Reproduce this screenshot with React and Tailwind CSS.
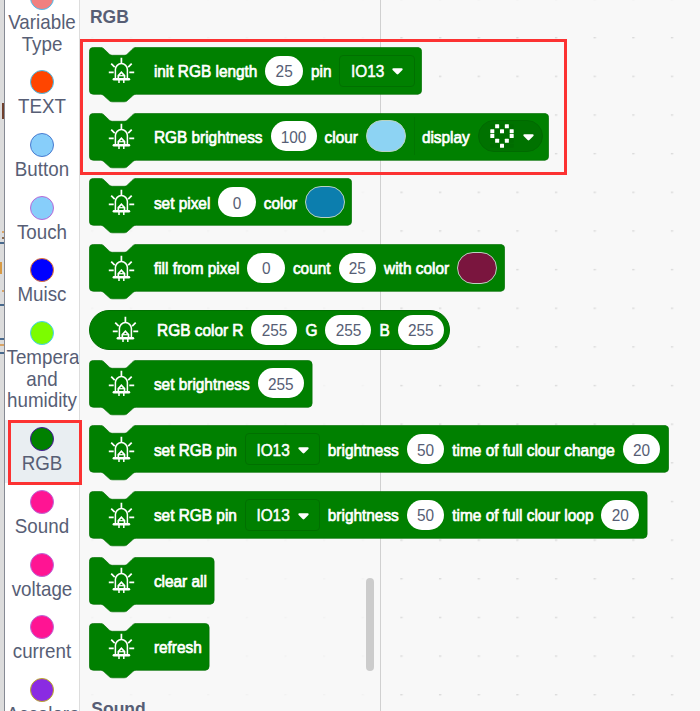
import React from "react";

const categories = [
  { label: "Variable Type", dot: "bg-[#f08080] border-[#45c1f2]" },
  { label: "TEXT", dot: "bg-[#ff4500] border-[#45c1f2]" },
  { label: "Button", dot: "bg-[#87cefa] border-[#4a7bd0]" },
  { label: "Touch", dot: "bg-[#87cefa] border-[#ba68d8]" },
  { label: "Muisc", dot: "bg-[#0000ff] border-[#f07a28]" },
  { label: "Temperature and humidity", dot: "bg-[#7cfc00] border-[#45d0f2]" },
  { label: "RGB", dot: "bg-[#008000] border-[#4b14a0]", active: true },
  { label: "Sound", dot: "bg-[#ff1493] border-[#ba68d8]" },
  { label: "voltage", dot: "bg-[#ff1493] border-[#ba68d8]" },
  { label: "current", dot: "bg-[#ff1493] border-[#ba68d8]" },
  { label: "Acceleration", dot: "bg-[#8a2be2] border-[#c0b020]" },
];

const blocks = [
  { w: 333, items: ["init RGB length", { n: "25" }, "pin", { menu: "IO13" }] },
  { w: 460, items: ["RGB brightness", { n: "100" }, "clour", { color: "bg-[#8dd3f3]" }, { seam: true }, "display", { matrix: true }] },
  { w: 263, items: ["set pixel", { n: "0" }, "color", { color: "bg-[#0c7eae]" }] },
  { w: 416, items: ["fill from pixel", { n: "0" }, "count", { n: "25" }, "with color", { color: "bg-[#7a153e]" }] },
  { w: 361, round: true, items: ["RGB color R", { n: "255" }, "G", { n: "255" }, "B", { n: "255" }] },
  { w: 223.5, items: ["set brightness", { n: "255" }] },
  { w: 580, items: ["set RGB pin", { menu: "IO13" }, "brightness", { n: "50" }, "time of full clour change", { n: "20" }] },
  { w: 558.5, items: ["set RGB pin", { menu: "IO13" }, "brightness", { n: "50" }, "time of full clour loop", { n: "20" }] },
  { w: 125.5, items: ["clear all"] },
  { w: 120.5, items: ["refresh"] },
];

function LedIcon() {
  return (
    <svg className="block h-[27px] w-[27px] shrink-0" viewBox="0 0 27 27" fill="none" stroke="#fff" strokeWidth="1.5">
      <path d="M7.4 21.5V12.6a6 6 0 0 1 12 0v8.9" />
      <path d="M5.9 22.2h15" strokeWidth="2.6" strokeLinecap="round" />
      <path d="M10.3 21.8v-3.2l3.1-3.4 3.1 3.4v3.2" strokeWidth="1.7" />
      <path d="M10.5 18.7h5.8" strokeWidth="1.2" />
      <path d="M11 23v3M15.8 23v3" />
      <path d="M13.4.7v5.5M3.2 6.6l3.5 3.6M23.7 6.6l-3.5 3.6M.8 15.4h4.9M21.3 15.4h4.9" strokeWidth="1.7" />
    </svg>
  );
}

function Caret() {
  return (
    <svg className="mt-0.5 block h-[7px] w-[11px] shrink-0" viewBox="0 0 11 7">
      <path d="M1.4.3h8.2c1 0 1.4.9.8 1.6L6.4 6.1q-.9.8-1.8 0L.6 1.9C0 1.2.4.3 1.4.3Z" fill="#fff" />
    </svg>
  );
}

const heart = ["01010", "10101", "10001", "01010", "00100"];

function Item({ item }) {
  if (typeof item === "string")
    return <span className="scale-y-[1.11] whitespace-nowrap text-white [-webkit-text-stroke:0.65px_white]">{item}</span>;
  if (item.n)
    return (
      <span className={"flex h-[30px] shrink-0 items-center justify-center rounded-full bg-white text-[#575e75] " + (item.n.length > 2 ? "w-[46px]" : "w-[37.5px]")}>
        <span className="scale-y-[1.11]">{item.n}</span>
      </span>
    );
  if (item.color) return <span className={"h-8 w-10 rounded-full border border-[#b9d3c0] " + item.color} />;
  if (item.seam) return <span className="-mr-px h-[38px] w-px bg-[#007600]" />;
  if (item.menu)
    return (
      <span className="-mr-[0.6px] flex h-8 w-[75.5px] items-center gap-2 rounded border border-[#007000] pl-[10.5px] text-white">
        <span className="scale-y-[1.11] [-webkit-text-stroke:0.45px_white]">{item.menu}</span>
        <Caret />
      </span>
    );
  return (
    <span className="flex h-8 w-[65px] items-center gap-[8.5px] rounded-full border border-[#006a00] bg-[#007200] pl-[11.5px]">
      <svg className="block h-6 w-6 shrink-0" viewBox="0 0 24 24">
        {heart.flatMap((row, y) =>
          row.split("").map((c, x) => (
            <rect key={x + "-" + y} x={x * 4.85 + 0.3} y={y * 4.85 + 0.3} width="4" height="4" rx="0.5" fill={c === "1" ? "#fff" : "#006c00"} />
          ))
        )}
      </svg>
      <Caret />
    </span>
  );
}

function Block({ w, round, items }) {
  const r = w - 4;
  const d =
    `M0.4 4.4a4 4 0 0 1 4-4H11.5c2 0 3 1 4 2l3.9 3.9c1 1 2 2 4 2h11.8c2 0 3-1 4-2l3.9-3.9c1-1 2-2 4-2H${r}a4 4 0 0 1 3.6 4V43.3a4 4 0 0 1-3.6 4H47.1c-2 0-3 1-4 2l-3.9 3.5c-1 1-2 2-4 2H23.4c-2 0-3-1-4-2l-3.9-3.5c-1-1-2-2-4-2H4.4a4 4 0 0 1-4-4Z`;
  if (round)
    return (
      <div className="mb-[10px] flex h-[39.6px] w-[361px] items-center gap-2 rounded-full border border-[#006f00] bg-[#008000] pl-[22px]">
        <div className="mr-[9.8px]"><LedIcon /></div>
        {items.map((item, i) => <Item key={i} item={item} />)}
      </div>
    );
  return (
    <div className="grid h-[65.8px]">
      <svg className="col-start-1 row-start-1 block h-14" width={w} viewBox={`0 0 ${w} 56`}>
        <path d={d} fill="#008000" stroke="#006f00" strokeWidth="0.7" />
      </svg>
      <div className="col-start-1 row-start-1 flex h-[47.6px] items-center gap-2 pl-[19px]">
        <div className="mr-[10.6px]"><LedIcon /></div>
        {items.map((item, i) => <Item key={i} item={item} />)}
      </div>
    </div>
  );
}

function CanvasDots() {
  return (
    <svg className="pointer-events-none absolute left-0 top-0 h-[711px] w-[700px]" viewBox="0 0 700 711">
      <defs>
        <pattern id="dots" x="400.3" y="37" width="38.65" height="38.65" patternUnits="userSpaceOnUse">
          <path d="M0 .7h2.4" stroke="#d9d9d9" strokeWidth="1.3" />
        </pattern>
      </defs>
      <rect x="382" y="0" width="318" height="711" fill="url(#dots)" />
      <rect x="80" y="0" width="300" height="711" fill="url(#dots)" opacity="0.2" />
    </svg>
  );
}

export default function App() {
  return (
    <div className="relative flex h-[711px] w-[700px] overflow-hidden bg-[#f8f8f8] font-['Liberation_Sans',Arial,sans-serif] text-[15.4px] leading-none">
      <CanvasDots />
      <div className="flex w-[5px] shrink-0 flex-col items-start overflow-hidden border-r border-[#868a94] bg-[#dcdcdc] pt-[103px]">
        <span className="ml-0.5 h-4 w-3 shrink-0 border-2 border-[#70402d]" />
        <span className="ml-0.5 mt-28 h-0.5 w-0.5 bg-[#d8a568]" />
        <span className="ml-0.5 mt-1 h-0.5 w-0.5 bg-[#8a6a50]" />
        <span className="mt-[3px] h-0.5 w-1 bg-[#48698c]" />
        <span className="mt-[18px] h-3 w-0.5 bg-[#d89b45]" />
        <span className="ml-0.5 mt-4 h-0.5 w-0.5 bg-[#d8a568]" />
        <span className="mt-3 h-0.5 w-1 bg-[#48698c]" />
        <span className="mt-8 h-0.5 w-1 bg-[#48698c]" />
        <span className="mt-1 h-0.5 w-1 bg-[#d8a568]" />
        <span className="mt-1.5 h-0.5 w-1 bg-[#48698c]" />
      </div>
      <aside className="z-0 -mt-[21.2px] w-[74px] shrink-0 overflow-hidden bg-white text-[18.8px] leading-[21.7px] text-[#575e75]">
        {categories.map((c) => (
          <div key={c.label} className={"px-[1.5px] pb-[8px] pt-[7px] " + (c.active ? "bg-[#e9eef2]" : "")}>
            <div className={"mx-auto h-6 w-6 rounded-full border " + c.dot} />
            <div className="pt-[2px] text-center">
              {c.label.split(" ").map((word) => (
                <span key={word} className="block scale-y-[1.05]">{word}</span>
              ))}
            </div>
          </div>
        ))}
      </aside>
      <div className="w-px shrink-0 bg-[#dddddd]" />
      <main className="z-0 h-[711px] w-[301px] shrink-0 border-r border-[#d0d0d0] pl-[9.3px]">
        <h2 className="flex h-[46.9px] items-start pl-[0.7px] pt-[8px] text-[17.5px] font-bold leading-[18px] text-[#575e75]">
          <span className="scale-y-[1.05]">RGB</span>
        </h2>
        {blocks.map((b, i) => <Block key={i} {...b} />)}
        <h2 className="mt-[10px] pl-[2px] text-[17.5px] font-bold leading-[20px] text-[#575e75]">Sound</h2>
      </main>
      <span className="absolute left-[366px] top-[578px] h-[93px] w-2 rounded-full bg-[#cccccc]" />
      <span className="absolute left-[80px] top-[39px] h-[136px] w-[487px] border-[3px] border-[#fc3232]" />
      <span className="absolute left-[8px] top-[420px] h-[65px] w-[74px] border-[3px] border-[#fc3232]" />
    </div>
  );
}
